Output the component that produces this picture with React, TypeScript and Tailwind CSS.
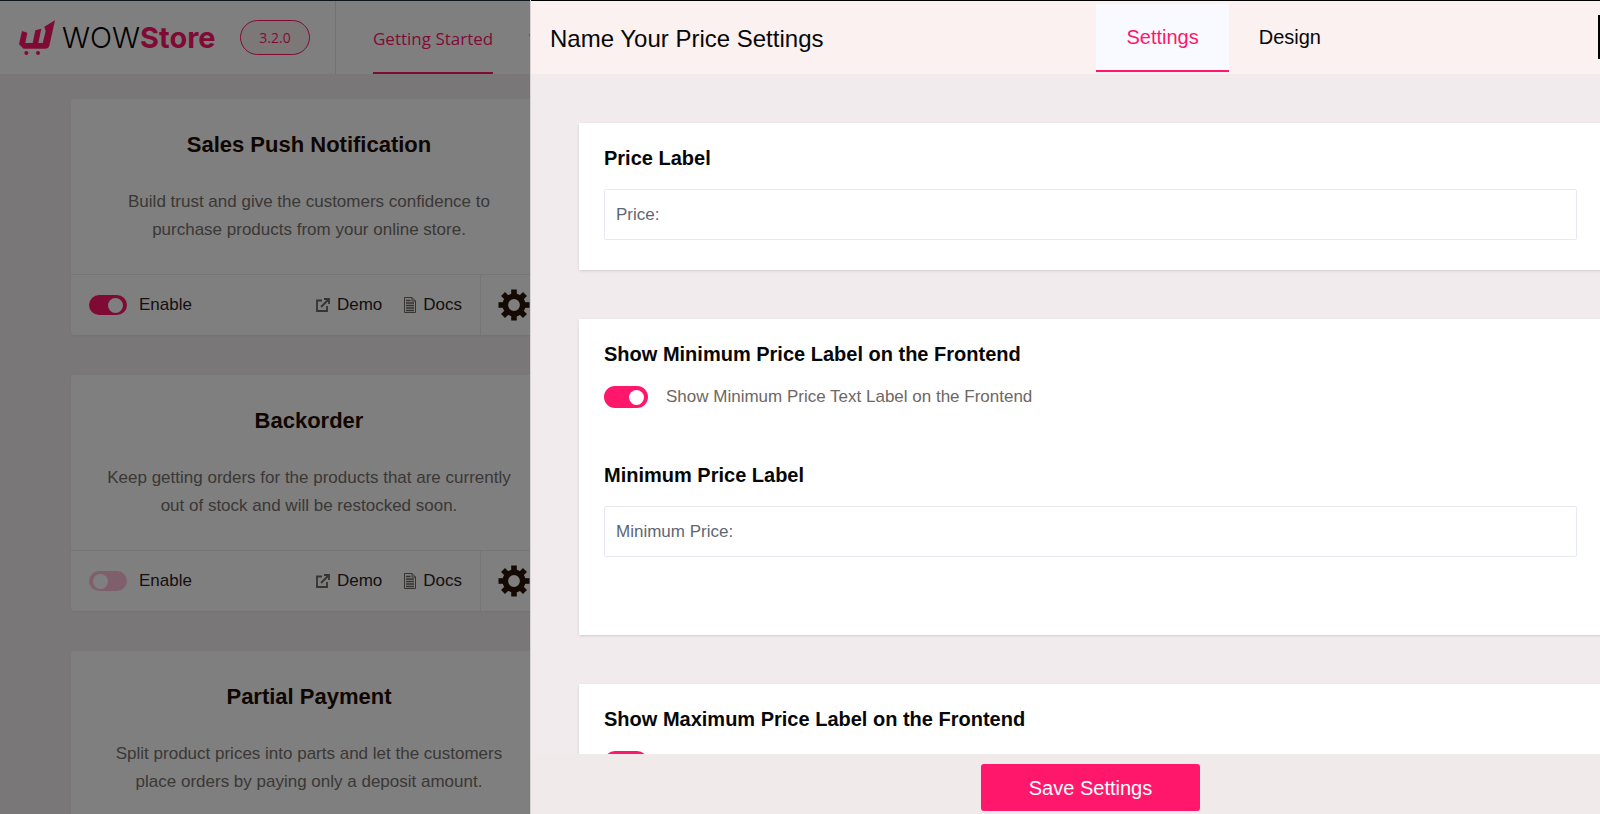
import { useState } from "react";
import type { ReactNode } from "react";

type addonType = {
  id: string;
  title: string;
  description: string;
  enabled: boolean;
  hasActions: boolean;
};

const addons: addonType[] = [
  {
    id: "sales-push",
    title: "Sales Push Notification",
    description:
      "Build trust and give the customers confidence to purchase products from your online store.",
    enabled: true,
    hasActions: true,
  },
  {
    id: "backorder",
    title: "Backorder",
    description:
      "Keep getting orders for the products that are currently out of stock and will be restocked soon.",
    enabled: false,
    hasActions: true,
  },
  {
    id: "partial-payment",
    title: "Partial Payment",
    description:
      "Split product prices into parts and let the customers place orders by paying only a deposit amount.",
    enabled: false,
    hasActions: false,
  },
];

function CartLogo() {
  return (
    <svg width="36" height="36" viewBox="0 0 108 108" aria-hidden="true">
      <path
        d="M9 33 L25 38 L19 69 L41 69 L49 31 L67 26 L58 69 L71 69 L80 34 L76 20 L108 1 L91 77 Q88 86 79 86 L14 86 L0 73 Z"
        fill="#ff176b"
      />
      <circle cx="22" cy="99" r="6" fill="#ff176b" />
      <circle cx="57" cy="99" r="6" fill="#ff176b" />
    </svg>
  );
}

function DemoIcon() {
  return (
    <svg
      width="14"
      height="14"
      viewBox="0 0 14 14"
      fill="none"
      stroke="#6e6763"
      strokeWidth="1.8"
      aria-hidden="true"
    >
      <path d="M6 2.5H1V13H11V8" />
      <path d="M8 1H13V6M13 1L5 9" />
    </svg>
  );
}

function DocsIcon() {
  return (
    <svg
      width="12"
      height="16"
      viewBox="0 0 12 16"
      fill="none"
      stroke="#6e6763"
      aria-hidden="true"
    >
      <path d="M0.5 0.5H8L11.5 4V15.5H0.5Z" />
      <path d="M8 0.5V4H11.5" />
      <path d="M2 3.5H6.5M2 6H10M2 8.5H10M2 11H10M2 13.5H10" strokeWidth="1.3" />
    </svg>
  );
}

function GearIcon() {
  return (
    <svg width="32" height="32" viewBox="-16 -16 32 32" aria-hidden="true">
      <circle r="8.7" fill="none" stroke="#2a1306" strokeWidth="5.6" />
      <g fill="#2a1306">
        <rect x="-2.8" y="-15.5" width="5.6" height="6" />
        <rect x="-2.8" y="-15.5" width="5.6" height="6" transform="rotate(45)" />
        <rect x="-2.8" y="-15.5" width="5.6" height="6" transform="rotate(90)" />
        <rect x="-2.8" y="-15.5" width="5.6" height="6" transform="rotate(135)" />
        <rect x="-2.8" y="-15.5" width="5.6" height="6" transform="rotate(180)" />
        <rect x="-2.8" y="-15.5" width="5.6" height="6" transform="rotate(225)" />
        <rect x="-2.8" y="-15.5" width="5.6" height="6" transform="rotate(270)" />
        <rect x="-2.8" y="-15.5" width="5.6" height="6" transform="rotate(315)" />
      </g>
    </svg>
  );
}

function AddonActions({ addon }: { addon: addonType }) {
  const [enabled, setEnabled] = useState(addon.enabled);

  return (
    <div className="flex h-[61px] border-t border-[#efe8ea] text-[17px] text-[#2e211c]">
      <div className="flex w-[410px] items-center justify-between border-r border-[#efe8ea] px-[18px]">
        <div className="flex items-center gap-3">
          <input
            type="checkbox"
            id={addon.id}
            checked={enabled}
            onChange={(e) => setEnabled(e.target.checked)}
            className="flex h-5 w-[38px] appearance-none items-center rounded-full bg-[#ffbfd8] px-1 before:size-[15px] before:rounded-full before:bg-white before:content-[''] checked:justify-end checked:bg-[#ff176b]"
          />
          <label htmlFor={addon.id}>Enable</label>
        </div>
        <div className="flex items-center gap-[22px]">
          <a href="#demo" className="flex items-center gap-[7px]">
            <DemoIcon />
            Demo
          </a>
          <a href="#docs" className="flex items-center gap-[7px]">
            <DocsIcon />
            Docs
          </a>
        </div>
      </div>
      <button
        type="button"
        aria-label="Addon settings"
        className="flex flex-1 items-center justify-center"
      >
        <GearIcon />
      </button>
    </div>
  );
}

function AddonCard({ addon }: { addon: addonType }) {
  return (
    <article className="w-[476px] rounded bg-white shadow-xs">
      <div className="px-8 pt-8 pb-[30px] text-center">
        <h2 className="text-[22px] leading-7 font-bold text-[#1e0c02]">
          {addon.title}
        </h2>
        <p className="mt-[29px] text-[17px] leading-7 text-[#76706c]">
          {addon.description}
        </p>
      </div>
      {addon.hasActions && <AddonActions addon={addon} />}
    </article>
  );
}

function SettingsCard({
  children,
  className,
}: {
  children: ReactNode;
  className: string;
}) {
  return (
    <section
      className={`flex shrink-0 flex-col bg-white px-[25px] pt-6 shadow ${className}`}
    >
      {children}
    </section>
  );
}

function TextField({
  id,
  label,
  value,
}: {
  id: string;
  label: string;
  value: string;
}) {
  const [text, setText] = useState(value);

  return (
    <div className="flex flex-col gap-5">
      <label
        htmlFor={id}
        className="text-[20px] leading-[22px] font-bold text-[#070707]"
      >
        {label}
      </label>
      <input
        type="text"
        id={id}
        value={text}
        onChange={(e) => setText(e.target.value)}
        className="h-[51px] rounded-xs border border-[#e6eaf0] px-[11px] text-[17px] text-[#5f6673]"
      />
    </div>
  );
}

function SwitchField({
  id,
  label,
  text,
}: {
  id: string;
  label: string;
  text?: string;
}) {
  const [checked, setChecked] = useState(true);

  return (
    <div className="flex flex-col gap-5">
      <h3 className="text-[20px] leading-[22px] font-bold text-[#070707]">
        {label}
      </h3>
      <div className="flex items-center gap-[18px]">
        <input
          type="checkbox"
          id={id}
          aria-label={label}
          checked={checked}
          onChange={(e) => setChecked(e.target.checked)}
          className="my-px flex h-[22px] w-11 appearance-none items-center rounded-full bg-[#ffbfd8] px-1 before:size-[15px] before:rounded-full before:bg-white before:content-[''] checked:justify-end checked:bg-[#ff176b]"
        />
        {text && (
          <label htmlFor={id} className="text-[17px] leading-6 text-[#6e6763]">
            {text}
          </label>
        )}
      </div>
    </div>
  );
}

function App() {
  const [tab, setTab] = useState("settings");

  return (
    <div className="relative h-screen overflow-hidden bg-[#f4eef0] font-['Liberation_Sans',Arial,sans-serif]">
      {/* Page behind the drawer */}
      <header className="flex h-[74px] border-t border-[#18283c] bg-white">
        <div className="flex w-[336px] items-center justify-between border-r border-[#e4e4e4] pr-[25px] pl-[19px]">
          <div className="flex items-center gap-[7px]">
            <CartLogo />
            <span className="font-[Inter,sans-serif] text-[29px] leading-9 font-light text-black">
              WOW
              <span className="font-bold text-[#ff176b]">Store</span>
            </span>
          </div>
          <span className="flex h-[35px] w-[70px] items-center justify-center rounded-full border border-[#ff176b] bg-[#fbf1f0] font-['Open_Sans',sans-serif] text-[14px] text-[#ff176b]">
            3.2.0
          </span>
        </div>
        <nav className="flex gap-9 pl-[37px] font-['Open_Sans',sans-serif] text-[17px]">
          <a
            href="#start"
            className="flex items-center border-b-2 border-[#ff176b] pt-1 text-[#ff176b]"
          >
            Getting Started
          </a>
          <a href="#welcome" className="flex items-center pt-1 text-[#2a1306]">
            W
          </a>
        </nav>
      </header>
      <main className="flex flex-col gap-10 pt-[25px] pl-[71px]">
        {addons.map((addon) => (
          <AddonCard key={addon.id} addon={addon} />
        ))}
      </main>

      <div className="absolute inset-0 bg-black/50" />

      {/* Settings drawer, runs past the right edge */}
      <aside className="absolute inset-y-0 -right-[50px] flex w-[70%] flex-col border-l border-[#d9d2d4] bg-[#f1ebee]">
        <div className="flex h-[74px] shrink-0 justify-between border-t border-black bg-[#fbf1f0] pr-2 pl-[19px]">
          <h1 className="flex items-center pt-0.5 text-[24px] text-[#070707]">
            Name Your Price Settings
          </h1>
          <div className="flex">
            <div className="mr-[247px] flex pt-[3px] pb-[2px]">
              <button
                type="button"
                onClick={() => setTab("settings")}
                className={`border-b-2 px-[30px] text-[20px] ${
                  tab === "settings"
                    ? "border-[#ff176b] bg-[#f8faff] text-[#ff176b]"
                    : "border-transparent text-[#070707]"
                }`}
              >
                Settings
              </button>
              <button
                type="button"
                onClick={() => setTab("design")}
                className={`border-b-2 px-[30px] text-[20px] ${
                  tab === "design"
                    ? "border-[#ff176b] bg-[#f8faff] text-[#ff176b]"
                    : "border-transparent text-[#070707]"
                }`}
              >
                Design
              </button>
            </div>
            <button
              type="button"
              aria-label="Close"
              className="mt-[14px] size-11 bg-black"
            />
          </div>
        </div>

        <div className="flex min-h-0 flex-1 flex-col gap-[49px] overflow-hidden px-12 pt-[49px]">
          <SettingsCard className="pb-[30px]">
            <TextField id="price-label" label="Price Label" value="Price:" />
          </SettingsCard>
          <SettingsCard className="gap-[55px] pb-[78px]">
            <SwitchField
              id="show-minimum"
              label="Show Minimum Price Label on the Frontend"
              text="Show Minimum Price Text Label on the Frontend"
            />
            <TextField
              id="minimum-label"
              label="Minimum Price Label"
              value="Minimum Price:"
            />
          </SettingsCard>
          <SettingsCard className="pb-[78px]">
            <SwitchField
              id="show-maximum"
              label="Show Maximum Price Label on the Frontend"
            />
          </SettingsCard>
        </div>

        <div className="flex h-[60px] shrink-0 items-start justify-center bg-[#f0eaea] pt-[10px]">
          <button
            type="button"
            className="h-[47px] rounded-[3px] bg-[#ff176b] px-12 text-[20px] text-white"
          >
            Save Settings
          </button>
        </div>
      </aside>
    </div>
  );
}

export default App;
